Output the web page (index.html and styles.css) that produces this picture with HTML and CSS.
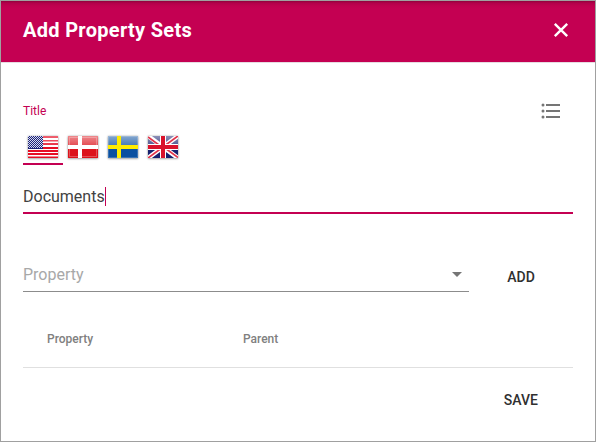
FILE: index.html
```html
<!DOCTYPE html>
<html lang="en">
<head>
<meta charset="utf-8">
<title>Add Property Sets</title>
<link rel="stylesheet" href="styles.css">
</head>
<body>
<section class="dialog">
  <header class="header">
    <h1>Add Property Sets</h1>
    <button class="close" aria-label="Close"><svg width="16" height="16" viewBox="0 0 16 16"><path d="M1.8 1.8 14.2 14.2M14.2 1.8 1.8 14.2" fill="none" stroke="#fff" stroke-width="2.4"/></svg></button>
  </header>
  <main class="content">
    <div class="label-row">
      <label for="title">Title</label>
      <svg width="20" height="16" viewBox="0 0 20 16" fill="#757575"><circle cx="2" cy="2" r="1.5"/><circle cx="2" cy="8" r="1.5"/><circle cx="2" cy="14" r="1.5"/><path d="M5 1h14v2H5zM5 7h14v2H5zM5 13h14v2H5z"/></svg>
    </div>
    <div class="tabs">
      <span class="tab active"><svg class="flag" viewBox="0 0 30 22">
        <defs>
          <linearGradient id="shine" x1="0" y1="0" x2="0" y2="1"><stop offset="0" stop-color="#fff" stop-opacity=".5"/><stop offset="1" stop-color="#fff" stop-opacity=".2"/></linearGradient>
          <pattern id="stars" width="4" height="4" patternUnits="userSpaceOnUse"><path d="M0 0h1v1H0zM2 2h1v1H2zM2 0h1v1H2zM1 1h1v1H1zM3 1h1v1H3zM0 2h1v1H0zM1 3h1v1H1zM3 3h1v1H3z" fill="#d7daf0"/></pattern>
        </defs>
        <path fill="#fff" d="M0 0h30v22H0z"/>
        <path fill="#e60d24" d="M0 0h30v2H0zM0 4h30v1.5H0zM0 7h30v2H0zM0 11h30v2H0zM0 14h30v2H0zM0 17h30v2H0zM0 20.5h30v1.5H0z"/>
        <path fill="#1c2378" d="M0 0h15v13H0z"/><path fill="url(#stars)" d="M0 0h15v12H0z"/>
        <path fill="url(#shine)" opacity=".7" d="M15 0h15v10H15z"/>
      </svg></span>
      <span class="tab"><svg class="flag" viewBox="0 0 30 22">
        <path fill="#dc141c" d="M0 0h30v22H0z"/><path fill="url(#shine)" d="M0 0h30v11H0z"/>
        <path fill="none" stroke="#fff" stroke-opacity=".25" d="M1.5 1.5h27v19h-27z"/>
        <path fill="#fff" d="M10 0h4v22h-4zM0 9h30v4H0z"/>
      </svg></span>
      <span class="tab"><svg class="flag" viewBox="0 0 30 22">
        <path fill="#0b50a0" d="M0 0h30v22H0z"/><path fill="url(#shine)" d="M0 0h30v11H0z"/>
        <path fill="none" stroke="#fff" stroke-opacity=".2" d="M.5 .5h29v21H.5z"/>
        <path fill="#ffec00" d="M9 0h4v22H9zM0 9h30v4H0z"/>
      </svg></span>
      <span class="tab"><svg class="flag" viewBox="0 0 30 22">
        <path fill="#17216f" d="M0 0h30v22H0z"/><path fill="url(#shine)" d="M0 0h30v11H0z"/>
        <path stroke="#fff" stroke-width="4.6" d="M0 0 30 22M30 0 0 22"/>
        <path stroke="#e0344a" stroke-width="1.7" d="M0 1 13 10.5M30 0 17 9.5M30 21.5 17 12M0 22 13 12.5"/>
        <path fill="#fff" d="M12 0h6v22h-6zM0 8h30v6H0z"/>
        <path fill="#d9122b" d="M13 0h4v22h-4zM0 9h30v4H0z"/>
      </svg></span>
    </div>
    <div class="title-field" id="title"><span>Documents</span><i class="caret"></i></div>
    <div class="add-row">
      <div class="select"><span>Property</span><i class="arrow"></i></div>
      <button class="action">ADD</button>
    </div>
    <div class="table-head"><span>Property</span><span>Parent</span></div>
    <footer><button class="action">SAVE</button></footer>
  </main>
</section>
</body>
</html>
```

FILE: styles.css
```css
* { box-sizing: border-box; }
body { margin: 0; font-family: Roboto, "Liberation Sans", sans-serif; background: #fff; }
button { border: 0; padding: 0; background: none; font: inherit; }
svg { display: block; }
.dialog { width: 596px; height: 442px; border: 1px solid #a0a0a0; overflow: hidden; }
.header {
  height: 62px; padding: 0 26px 4px 22px;
  display: flex; align-items: center; justify-content: space-between;
  background: linear-gradient(#91003c 0, #b2004a 2px, #c0004f 5px, #c40052 8px);
  border-bottom: 1px solid #e6dce1;
}
h1 { margin: 0; font-size: 20px; line-height: 24px; font-weight: 700; letter-spacing: .3px; color: #fff; }
.content { padding: 36px 22px 0; }
.label-row {
  height: 24px; padding-right: 12px;
  display: flex; align-items: center; justify-content: space-between;
  font-size: 12px; color: #c40052;
}
.tabs { display: flex; margin-top: 8px; }
.tab { width: 40px; height: 34px; padding: 5px 0 0 5px; border-bottom: 2px solid transparent; }
.tab.active { border-color: #c40052; }
.flag { width: 30px; height: 22px; box-shadow: 0 0 2px rgba(0,0,0,.3), 0 1px 2px rgba(0,0,0,.25); }
.title-field {
  height: 33px; margin-top: 16px; border-bottom: 2px solid #c40052;
  display: flex; align-items: center;
  font-size: 16px; color: #424242;
}
.caret { width: 1px; height: 19px; background: #c40052; }
.add-row { display: flex; margin-top: 44px; }
.select {
  width: 446px; height: 34px; padding-right: 7px; border-bottom: 1px solid #8c8c8c;
  display: flex; align-items: center; justify-content: space-between;
  font-size: 16px; color: #a8a8a8;
}
.arrow { border: 5px solid transparent; border-top-color: #757575; border-bottom: 0; }
.action { height: 36px; font-size: 14px; font-weight: 500; color: #303030; }
.add-row .action { width: 104px; padding-top: 2px; }
.table-head {
  height: 58px; margin-top: 16px; padding: 0 24px; border-bottom: 1px solid #e0e0e0;
  display: grid; grid-template-columns: 196px 1fr; align-items: center;
  font-size: 12px; font-weight: 500; color: #808080;
}
footer { display: flex; justify-content: flex-end; padding: 14px 35px 0 0; }
```
